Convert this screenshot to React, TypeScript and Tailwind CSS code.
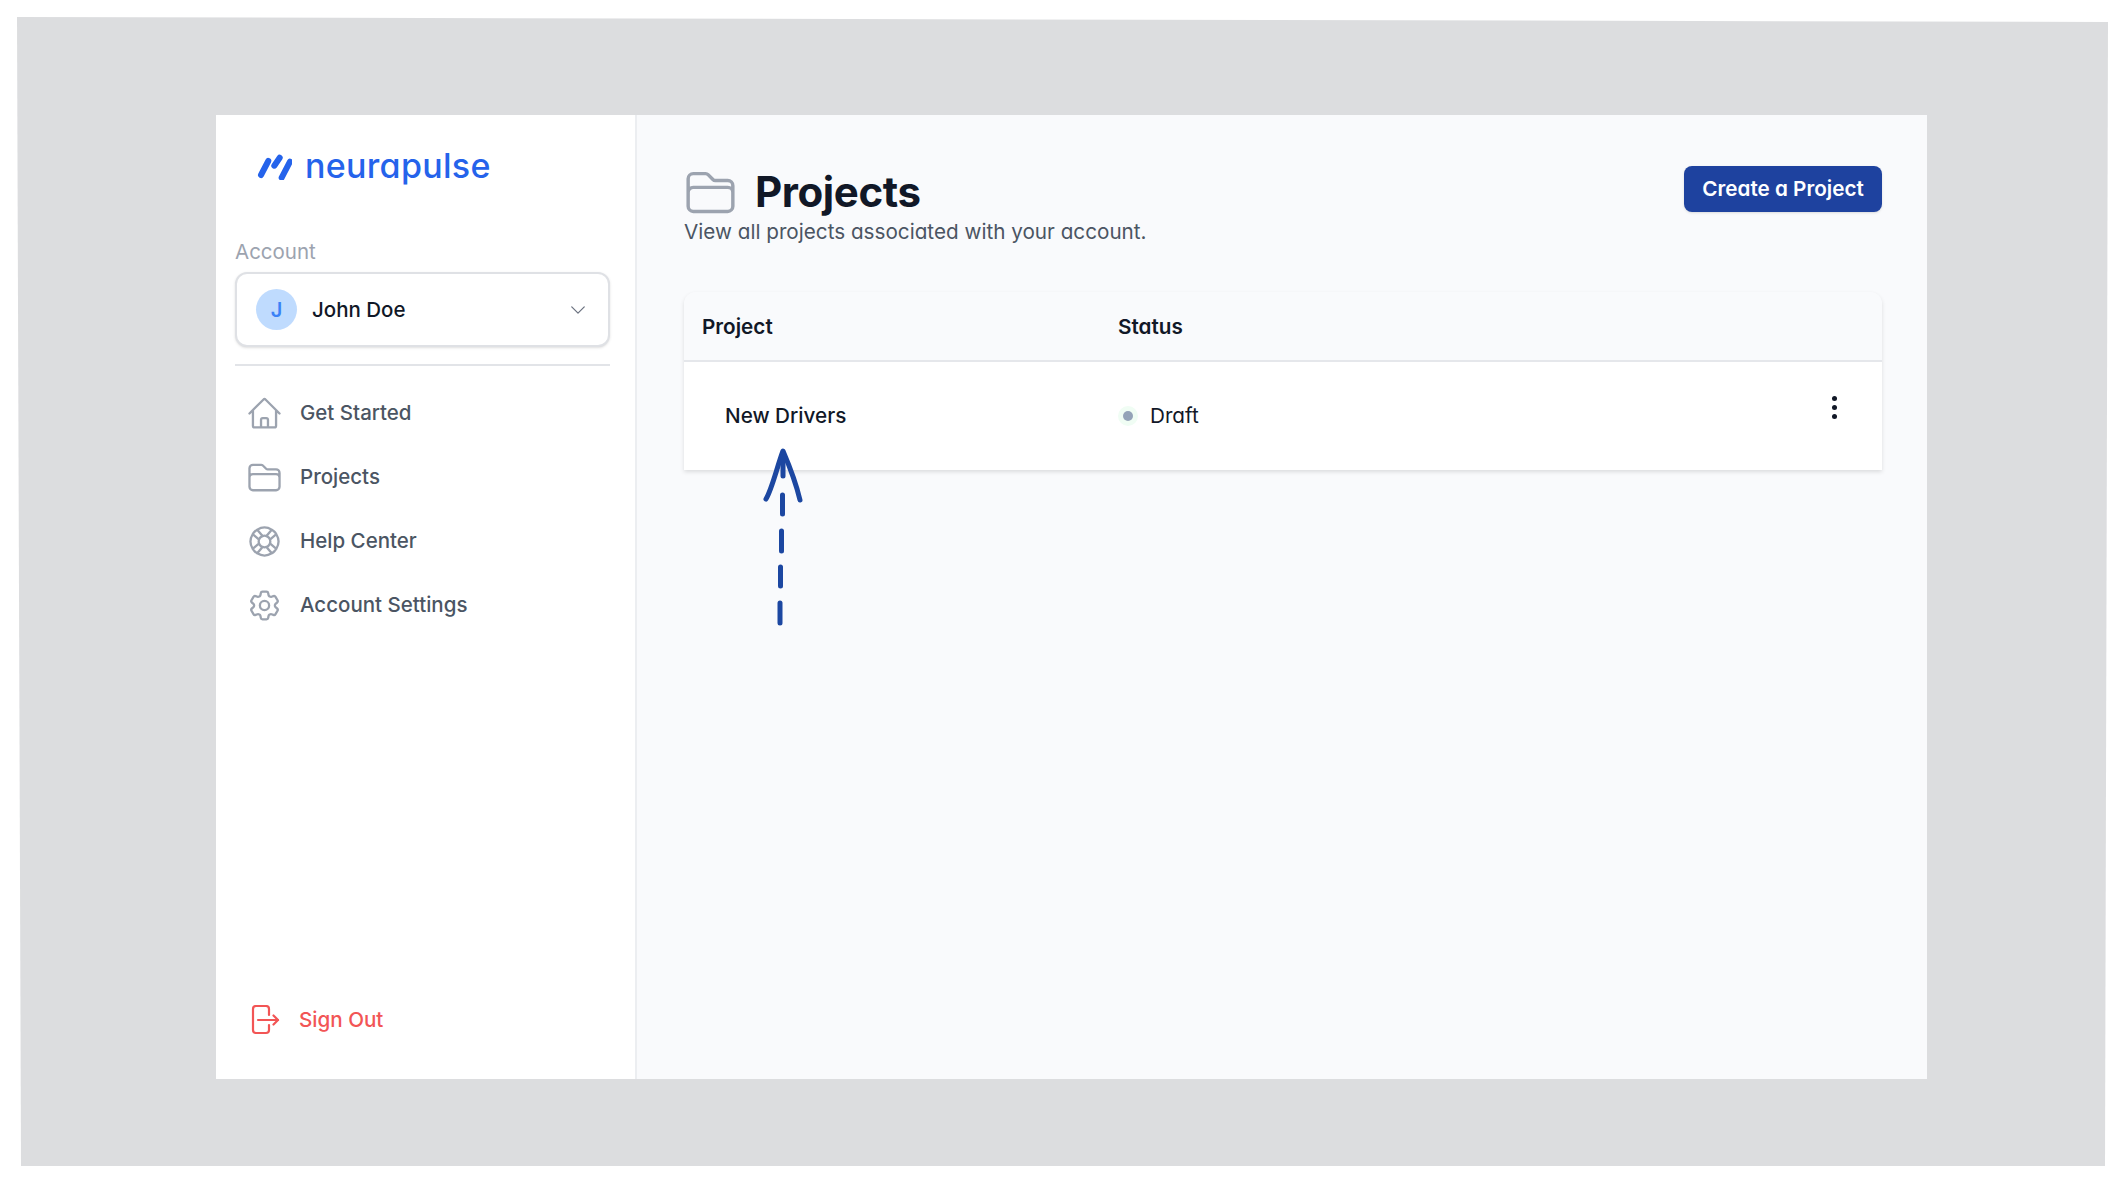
import React from "react";
import {
  HiOutlineHome,
  HiOutlineFolder,
  HiOutlineLifebuoy,
  HiOutlineCog6Tooth,
  HiOutlineChevronDown,
} from "react-icons/hi2";

const nav = [
  { label: "Get Started", Icon: HiOutlineHome },
  { label: "Projects", Icon: HiOutlineFolder },
  { label: "Help Center", Icon: HiOutlineLifebuoy },
  { label: "Account Settings", Icon: HiOutlineCog6Tooth },
];

function LogoMark() {
  return (
    <svg width="36" height="28" viewBox="0 0 36 28" fill="none" className="shrink-0">
      <g stroke="#2563eb" strokeWidth="6" strokeLinecap="round">
        <path d="M5 23 L12.3 9" />
        <path d="M18.3 13.7 L23.7 5.7" />
        <path d="M25.7 25.7 L34 9.7" />
      </g>
    </svg>
  );
}

function SignOutIcon() {
  return (
    <svg width="29" height="30" viewBox="0 0 29 30" fill="none" className="shrink-0">
      <g stroke="#f25555" strokeWidth="2.2" strokeLinecap="round" strokeLinejoin="round">
        <path d="M18 10 V4 a3 3 0 0 0 -3 -3 H5 a3 3 0 0 0 -3 3 V25 a3 3 0 0 0 3 3 H15 a3 3 0 0 0 3 -3 V20" />
        <path d="M7 15 H27" />
        <path d="M22.5 10.5 L27 15 L22.5 19.5" />
      </g>
    </svg>
  );
}

function HandArrow() {
  return (
    <svg
      width="50"
      height="190"
      viewBox="0 0 50 190"
      fill="none"
      className="absolute left-[122px] top-[330px]"
    >
      <g stroke="#1c47a1" strokeWidth="5" strokeLinecap="round" strokeLinejoin="round">
        <path d="M7 54 C13 44 18 22 24 6 C30 20 37 38 41 55" />
        <path d="M24 9 V31" />
        <path d="M23.5 50 V69" />
        <path d="M22.5 86 V106" />
        <path d="M21.5 122 V141" />
        <path d="M21 158 V178" />
      </g>
    </svg>
  );
}

export default function App() {
  return (
    <div className="h-[1183px] w-full overflow-hidden bg-white pl-[14px] pt-[16px] font-['Inter',sans-serif]">
      <div className="h-[1152px] w-[2094px] bg-[#dcdddf] pl-[202px] pt-[99px] [clip-path:polygon(3px_1px,2094px_6px,2091px_1150px,7px_1150px)]">
        <div className="flex h-[964px] w-[1711px] bg-[#f9fafc]">
          <aside className="flex w-[421px] shrink-0 flex-col border-r-2 border-[#eceef1] bg-white pl-[19px] pr-[25px] pb-[27px] pt-[31px]">
            <div className="flex h-[40px] items-center pl-[21px]">
              <LogoMark />
              <span className="ml-[13px] text-[34px] font-medium leading-[40px] tracking-[0.3px] text-[#2563eb] [font-feature-settings:'cv11']">
                neurapulse
              </span>
            </div>
            <div className="mt-[52px] text-[20.5px] leading-[28px] text-[#9ca3af]">Account</div>
            <div className="mt-[6px] flex h-[75px] items-center rounded-[12px] border-2 border-[#dfe1e5] bg-white pl-[19px] pr-[20px] shadow-sm">
              <div className="flex h-[41px] w-[41px] items-center justify-center rounded-full bg-[#bfdbfe] text-[20px] font-semibold text-[#3b82f6]">
                J
              </div>
              <span className="ml-[15px] pt-[1px] text-[20.5px] font-medium text-[#111827]">John Doe</span>
              <HiOutlineChevronDown className="ml-auto h-[20px] w-[20px] text-[#6b7280]" />
            </div>
            <div className="mt-[17px] h-[2px] bg-[#e2e4e8]" />
            <nav className="mt-[15px] flex flex-col">
              {nav.map(({ label, Icon }) => (
                <div key={label} className="flex h-[64px] items-center pl-[11px]">
                  <Icon className="h-[37px] w-[37px] shrink-0 text-[#9ca3af]" />
                  <span className="ml-[17px] text-[20.5px] font-medium text-[#4b5563]">{label}</span>
                </div>
              ))}
            </nav>
            <div className="mt-auto flex h-[64px] items-center pl-[16px]">
              <SignOutIcon />
              <span className="ml-[19px] text-[20.6px] font-medium text-[#f25555]">Sign Out</span>
            </div>
          </aside>
          <main className="relative min-w-0 flex-1 pl-[47px] pr-[45px] pt-[51px]">
            <div className="flex items-start justify-between">
              <div>
                <div className="flex h-[50px] items-center">
                  <HiOutlineFolder className="-ml-[1px] mt-[2px] h-[55px] w-[55px] shrink-0 text-[#9ca3af]" />
                  <h1 className="ml-[17px] mt-[1px] text-[42px] font-bold leading-[50px] tracking-[-0.4px] text-[#111827] [font-feature-settings:'cv11']">
                    Projects
                  </h1>
                </div>
                <p className="mt-[2px] text-[20.7px] leading-[28px] text-[#4b5563] [font-feature-settings:'cv11']">
                  View all projects associated with your account.
                </p>
              </div>
              <button className="h-[46px] w-[198px] rounded-[8px] bg-[#1e429f] text-[20.7px] font-semibold text-white shadow-sm [font-feature-settings:'cv11']">
                Create a Project
              </button>
            </div>
            <div className="mt-[46px] overflow-hidden rounded-t-[12px] shadow-[0_2px_4px_rgba(0,0,0,0.12)]">
              <div className="flex h-[70px] items-center border-b-2 border-[#e5e7eb] bg-[#f9fafc] pl-[18px] pt-[1px] text-[20.7px] font-semibold text-[#111827] [font-feature-settings:'cv11']">
                <div className="w-[416px]">Project</div>
                <div>Status</div>
              </div>
              <div className="flex h-[108px] items-center bg-white pl-[41px] pr-[45px] text-[20.7px] font-medium text-[#111827] [font-feature-settings:'cv11']">
                <div className="w-[393px]">New Drivers</div>
                <div className="flex h-[20px] w-[20px] items-center justify-center rounded-full bg-[#f0fdf4]">
                  <div className="h-[10px] w-[10px] rounded-full bg-[#94a3b8]" />
                </div>
                <span className="ml-[12px] font-normal">Draft</span>
                <div className="ml-auto flex -translate-y-[9px] flex-col gap-[4px]">
                  <div className="h-[5px] w-[5px] rounded-full bg-[#111827]" />
                  <div className="h-[5px] w-[5px] rounded-full bg-[#111827]" />
                  <div className="h-[5px] w-[5px] rounded-full bg-[#111827]" />
                </div>
              </div>
            </div>
            <HandArrow />
          </main>
        </div>
      </div>
    </div>
  );
}
